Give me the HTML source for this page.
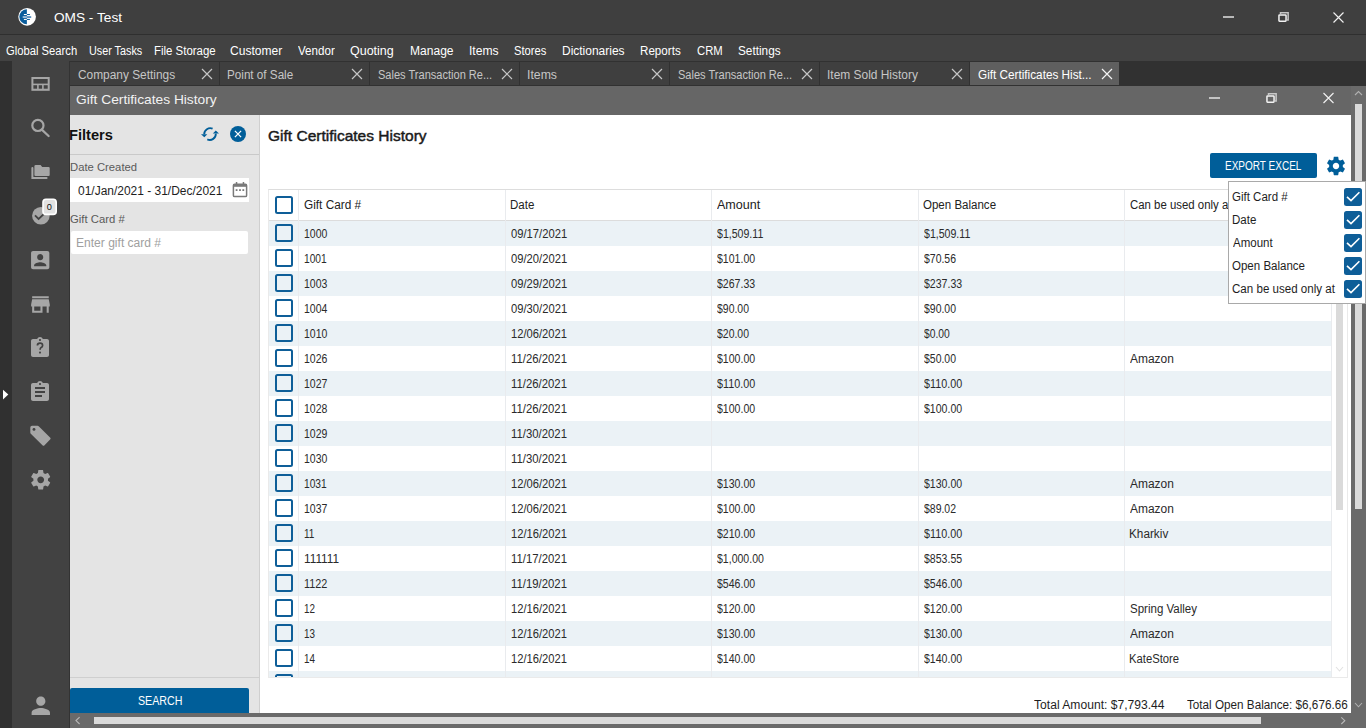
<!DOCTYPE html>
<html><head><meta charset="utf-8"><title>OMS - Test</title>
<style>
html,body{margin:0;padding:0;width:1366px;height:728px;overflow:hidden;background:#3c3c3c;font-family:"Liberation Sans", sans-serif;}
</style></head><body>
<div style="position:absolute;left:0px;top:0px;width:1366px;height:34px;background:#3f3f3f;"></div>
<div style="position:absolute;left:0px;top:34px;width:1366px;height:1px;background:#2f2f2f;"></div>
<svg style="position:absolute;left:17px;top:7px" width="20" height="20" viewBox="0 0 20 20">
<circle cx="10.1" cy="9.85" r="8.85" fill="#fff"/>
<path d="M9.9 2.15 A7.6 7.6 0 0 0 9.9 17.35 Z" fill="#0a5d9c"/>
<rect x="6.9" y="7" width="3" height="1.05" fill="#fff"/>
<rect x="9.9" y="7" width="3" height="1.05" fill="#0a5d9c"/>
<rect x="5.7" y="9.25" width="4.2" height="1.6" fill="#b9cde0"/>
<rect x="9.9" y="9.25" width="4.3" height="1.6" fill="#3f7fb5"/>
<rect x="6.9" y="11.9" width="3" height="1.05" fill="#fff"/>
<rect x="9.9" y="11.9" width="3" height="1.05" fill="#0a5d9c"/>
</svg>
<div style="position:absolute;left:53.65px;top:8.20px;font-size:13px;font-weight:400;line-height:20px;color:#ffffff;white-space:nowrap;transform:scaleX(1.0497);transform-origin:0 0;">OMS - Test</div>
<div style="position:absolute;left:1223px;top:16px;width:11px;height:2px;background:#b8b8b8;"></div>
<svg style="position:absolute;left:1277px;top:11px" width="14" height="13" viewBox="0 0 14 13">
<rect x="1.95" y="3.95" width="7.1" height="6.2" fill="none" stroke="#f2f2f2" stroke-width="1.5" rx="0.6"/>
<path d="M3.5 3.2 V1.75 H11.15 V8.9 H9.8" fill="none" stroke="#c4c4c4" stroke-width="1.5"/>
</svg>
<svg style="position:absolute;left:1333px;top:12px" width="11" height="11" viewBox="0 0 11 11">
<path d="M0.5 0.5 L10.5 10.5 M10.5 0.5 L0.5 10.5" stroke="#f0f0f0" stroke-width="1.15"/></svg>
<div style="position:absolute;left:0px;top:35px;width:1366px;height:26px;background:#424242;"></div>
<div style="position:absolute;left:6.03px;top:41.00px;font-size:12.3px;font-weight:400;line-height:20px;color:#ffffff;white-space:nowrap;transform:scaleX(0.9139);transform-origin:0 0;">Global Search</div>
<div style="position:absolute;left:89.37px;top:41.00px;font-size:12.3px;font-weight:400;line-height:20px;color:#ffffff;white-space:nowrap;transform:scaleX(0.8775);transform-origin:0 0;">User Tasks</div>
<div style="position:absolute;left:154.26px;top:41.00px;font-size:12.3px;font-weight:400;line-height:20px;color:#ffffff;white-space:nowrap;transform:scaleX(0.9305);transform-origin:0 0;">File Storage</div>
<div style="position:absolute;left:229.89px;top:41.00px;font-size:12.3px;font-weight:400;line-height:20px;color:#ffffff;white-space:nowrap;transform:scaleX(0.9794);transform-origin:0 0;">Customer</div>
<div style="position:absolute;left:298.05px;top:41.00px;font-size:12.3px;font-weight:400;line-height:20px;color:#ffffff;white-space:nowrap;transform:scaleX(0.9427);transform-origin:0 0;">Vendor</div>
<div style="position:absolute;left:350.21px;top:41.00px;font-size:12.3px;font-weight:400;line-height:20px;color:#ffffff;white-space:nowrap;transform:scaleX(1.0153);transform-origin:0 0;">Quoting</div>
<div style="position:absolute;left:410.11px;top:41.00px;font-size:12.3px;font-weight:400;line-height:20px;color:#ffffff;white-space:nowrap;transform:scaleX(0.9796);transform-origin:0 0;">Manage</div>
<div style="position:absolute;left:469.38px;top:41.00px;font-size:12.3px;font-weight:400;line-height:20px;color:#ffffff;white-space:nowrap;transform:scaleX(0.9868);transform-origin:0 0;">Items</div>
<div style="position:absolute;left:514.49px;top:41.00px;font-size:12.3px;font-weight:400;line-height:20px;color:#ffffff;white-space:nowrap;transform:scaleX(0.9101);transform-origin:0 0;">Stores</div>
<div style="position:absolute;left:562.42px;top:41.00px;font-size:12.3px;font-weight:400;line-height:20px;color:#ffffff;white-space:nowrap;transform:scaleX(0.9733);transform-origin:0 0;">Dictionaries</div>
<div style="position:absolute;left:640.25px;top:41.00px;font-size:12.3px;font-weight:400;line-height:20px;color:#ffffff;white-space:nowrap;transform:scaleX(0.9451);transform-origin:0 0;">Reports</div>
<div style="position:absolute;left:696.93px;top:41.00px;font-size:12.3px;font-weight:400;line-height:20px;color:#ffffff;white-space:nowrap;transform:scaleX(0.9176);transform-origin:0 0;">CRM</div>
<div style="position:absolute;left:738.46px;top:41.00px;font-size:12.3px;font-weight:400;line-height:20px;color:#ffffff;white-space:nowrap;transform:scaleX(0.9583);transform-origin:0 0;">Settings</div>
<div style="position:absolute;left:0px;top:61px;width:12px;height:667px;background:#303030;"></div>
<div style="position:absolute;left:12px;top:61px;width:57px;height:667px;background:#424242;"></div>
<div style="position:absolute;left:69px;top:61px;width:1px;height:667px;background:#333333;"></div>
<svg style="position:absolute;left:2px;top:388px" width="8" height="13" viewBox="0 0 8 13"><path d="M1 1.7 L6.3 6.55 L1 11.4 Z" fill="#fff"/></svg>
<svg style="position:absolute;left:31px;top:76px" width="20" height="16" viewBox="0 0 20 16">
<rect x="0.4" y="1" width="18.3" height="13.8" fill="#a6a6a6"/>
<rect x="2.4" y="3" width="14.3" height="4.6" fill="#424242"/>
<rect x="2.4" y="9.2" width="3.7" height="3.5" fill="#424242"/>
<rect x="7.7" y="9.2" width="3.4" height="3.5" fill="#424242"/>
<rect x="12.7" y="9.2" width="4" height="3.5" fill="#424242"/>
</svg>
<svg style="position:absolute;left:30px;top:118px" width="20" height="20" viewBox="0 0 20 20">
<circle cx="7.9" cy="7.4" r="5.6" fill="none" stroke="#a6a6a6" stroke-width="2.2"/>
<path d="M11.8 11.6 L18.6 18" stroke="#a6a6a6" stroke-width="2.2" stroke-linecap="round"/>
</svg>
<svg style="position:absolute;left:30px;top:163px" width="21" height="18" viewBox="0 0 21 18">
<path d="M2.4 5 V14.9 H16.6" fill="none" stroke="#a6a6a6" stroke-width="2" stroke-linecap="round"/>
<path d="M4.4 3.2 Q4.4 1.9 5.7 1.9 H10.6 L12.2 4 H18.6 Q19.7 4 19.7 5.1 V12 Q19.7 13.1 18.6 13.1 H5.5 Q4.4 13.1 4.4 12 Z" fill="#a6a6a6"/>
</svg>
<svg style="position:absolute;left:30px;top:196px" width="30" height="32" viewBox="0 0 30 32">
<circle cx="10.9" cy="19.8" r="8.8" fill="#a6a6a6"/>
<path d="M5 19.4 L8.6 23 L14 17.8" fill="none" stroke="#424242" stroke-width="1.8"/>
<rect x="13" y="3.2" width="13.2" height="15.2" rx="3" fill="#e2e2e2" stroke="#fff" stroke-width="1.6"/>
<text x="19.4" y="13.7" font-family="Liberation Sans" font-size="9.2" text-anchor="middle" fill="#111">0</text>
</svg>
<svg style="position:absolute;left:28.4px;top:247.8px" width="24.4" height="24.4" viewBox="0 0 24 24">
<path d="M3 5v14c0 1.1.89 2 2 2h14c1.1 0 2-.9 2-2V5c0-1.1-.9-2-2-2H5c-1.11 0-2 .9-2 2zm12 4c0 1.66-1.34 3-3 3s-3-1.34-3-3 1.34-3 3-3 3 1.34 3 3zm-9 8c0-2 4-3.1 6-3.1s6 1.1 6 3.1v1H6v-1z" fill="#a6a6a6"/>
</svg>
<svg style="position:absolute;left:28.1px;top:291.8px" width="24.9" height="24.1" viewBox="0 0 24 23.2">
<path d="M20 4H4v2h16V4zm1 10v-2l-1-5H4l-1 5v2h1v6h10v-6h4v6h2v-6h1zm-9 4H6v-4h6v4z" fill="#a6a6a6"/>
</svg>
<svg style="position:absolute;left:28.4px;top:335.9px" width="24" height="24" viewBox="0 0 24 24">
<path d="M19 3h-4.18C14.4 1.84 13.3 1 12 1c-1.3 0-2.4.84-2.82 2H5c-1.1 0-2 .9-2 2v14c0 1.1.9 2 2 2h14c1.1 0 2-.9 2-2V5c0-1.1-.9-2-2-2zm-7 0c.55 0 1 .45 1 1s-.45 1-1 1-1-.45-1-1 .45-1 1-1z" fill="#a6a6a6"/>
<path d="M9.4 9.6 Q9.4 7.2 12 7.2 Q14.6 7.2 14.6 9.4 Q14.6 10.8 13.1 11.6 Q12.1 12.2 12.1 13.8" fill="none" stroke="#424242" stroke-width="1.7"/>
<circle cx="12" cy="16.6" r="1.05" fill="#424242"/>
</svg>
<svg style="position:absolute;left:28.4px;top:379.9px" width="24" height="24" viewBox="0 0 24 24">
<path d="M19 3h-4.18C14.4 1.84 13.3 1 12 1c-1.3 0-2.4.84-2.82 2H5c-1.1 0-2 .9-2 2v14c0 1.1.9 2 2 2h14c1.1 0 2-.9 2-2V5c0-1.1-.9-2-2-2zm-7 0c.55 0 1 .45 1 1s-.45 1-1 1-1-.45-1-1 .45-1 1-1zm2 14H7v-2h7v2zm3-4H7v-2h10v2zm0-4H7V7h10v2z" fill="#a6a6a6"/>
</svg>
<svg style="position:absolute;left:26px;top:421px" width="30" height="30" viewBox="0 0 30 30">
<path d="M4.3 6.4 Q4.3 4.7 6 4.7 H11.6 Q12.2 4.7 12.7 5.2 L24.3 16.7 Q25 17.5 24.3 18.3 L18.3 24.4 Q17.5 25.2 16.7 24.4 L4.8 12.8 Q4.3 12.3 4.3 11.6 Z" fill="#a6a6a6"/>
<circle cx="8" cy="8.4" r="1.45" fill="#424242"/>
</svg>
<svg style="position:absolute;left:28.7px;top:467.7px" width="23.4" height="23.6" viewBox="0 0 24 24">
<path d="M19.43 12.98c.04-.32.07-.64.07-.98s-.03-.66-.07-.98l2.11-1.65c.19-.15.24-.42.12-.64l-2-3.46c-.12-.22-.39-.3-.61-.22l-2.49 1c-.52-.4-1.08-.73-1.69-.98l-.38-2.65C14.46 2.18 14.25 2 14 2h-4c-.25 0-.46.18-.49.42l-.38 2.650c-.61.25-1.17.59-1.69.98l-2.49-1c-.23-.09-.49 0-.61.22l-2 3.46c-.13.22-.07.49.12.64l2.11 1.65c-.04.32-.07.65-.07.98s.03.66.07.98l-2.11 1.65c-.19.15-.24.42-.12.64l2 3.46c.12.22.39.3.61.22l2.49-1c.52.4 1.08.73 1.69.98l.38 2.65c.03.24.24.42.49.42h4c.25 0 .46-.18.49-.42l.38-2.65c.61-.25 1.17-.59 1.69-.98l2.49 1c.23.09.49 0 .61-.22l2-3.46c.12-.22.07-.49-.12-.64l-2.11-1.65zM12 15.5c-1.93 0-3.5-1.57-3.5-3.5s1.57-3.5 3.5-3.5 3.5 1.57 3.5 3.5-1.57 3.5-3.5 3.5z" fill="#a6a6a6"/>
</svg>
<svg style="position:absolute;left:26.8px;top:692.4px" width="27.6" height="27" viewBox="0 0 24 23.5">
<path d="M12 12c2.21 0 4-1.79 4-4s-1.790-4-4-4-4 1.79-4 4 1.79 4 4 4zm0 2c-2.67 0-8 1.34-8 4v2h16v-2c0-2.66-5.33-4-8-4z" fill="#a6a6a6"/>
</svg>
<div style="position:absolute;left:70px;top:61px;width:1296px;height:25px;background:#313131;"></div>
<div style="position:absolute;left:70px;top:62px;width:149px;height:23px;background:#3f3f3f;"></div>
<div style="position:absolute;left:77.80px;top:65.00px;font-size:12.3px;font-weight:400;line-height:20px;color:#c6c6c6;white-space:nowrap;transform:scaleX(0.9669);transform-origin:0 0;">Company Settings</div>
<svg style="position:absolute;left:201px;top:68px" width="12" height="12" viewBox="0 0 12 12"><path d="M1 1 L11 11 M11 1 L1 11" stroke="#c6c6c6" stroke-width="1.2"/></svg>
<div style="position:absolute;left:220px;top:62px;width:149px;height:23px;background:#3f3f3f;"></div>
<div style="position:absolute;left:227.44px;top:65.00px;font-size:12.3px;font-weight:400;line-height:20px;color:#c6c6c6;white-space:nowrap;transform:scaleX(0.9495);transform-origin:0 0;">Point of Sale</div>
<svg style="position:absolute;left:351px;top:68px" width="12" height="12" viewBox="0 0 12 12"><path d="M1 1 L11 11 M11 1 L1 11" stroke="#c6c6c6" stroke-width="1.2"/></svg>
<div style="position:absolute;left:370px;top:62px;width:149px;height:23px;background:#3f3f3f;"></div>
<div style="position:absolute;left:377.90px;top:65.00px;font-size:12.3px;font-weight:400;line-height:20px;color:#c6c6c6;white-space:nowrap;transform:scaleX(0.8981);transform-origin:0 0;">Sales Transaction Re...</div>
<svg style="position:absolute;left:501px;top:68px" width="12" height="12" viewBox="0 0 12 12"><path d="M1 1 L11 11 M11 1 L1 11" stroke="#c6c6c6" stroke-width="1.2"/></svg>
<div style="position:absolute;left:520px;top:62px;width:149px;height:23px;background:#3f3f3f;"></div>
<div style="position:absolute;left:527.27px;top:65.00px;font-size:12.3px;font-weight:400;line-height:20px;color:#c6c6c6;white-space:nowrap;transform:scaleX(0.9972);transform-origin:0 0;">Items</div>
<svg style="position:absolute;left:651px;top:68px" width="12" height="12" viewBox="0 0 12 12"><path d="M1 1 L11 11 M11 1 L1 11" stroke="#c6c6c6" stroke-width="1.2"/></svg>
<div style="position:absolute;left:670px;top:62px;width:149px;height:23px;background:#3f3f3f;"></div>
<div style="position:absolute;left:677.90px;top:65.00px;font-size:12.3px;font-weight:400;line-height:20px;color:#c6c6c6;white-space:nowrap;transform:scaleX(0.8981);transform-origin:0 0;">Sales Transaction Re...</div>
<svg style="position:absolute;left:801px;top:68px" width="12" height="12" viewBox="0 0 12 12"><path d="M1 1 L11 11 M11 1 L1 11" stroke="#c6c6c6" stroke-width="1.2"/></svg>
<div style="position:absolute;left:820px;top:62px;width:149px;height:23px;background:#3f3f3f;"></div>
<div style="position:absolute;left:827.30px;top:65.00px;font-size:12.3px;font-weight:400;line-height:20px;color:#c6c6c6;white-space:nowrap;transform:scaleX(0.9707);transform-origin:0 0;">Item Sold History</div>
<svg style="position:absolute;left:951px;top:68px" width="12" height="12" viewBox="0 0 12 12"><path d="M1 1 L11 11 M11 1 L1 11" stroke="#c6c6c6" stroke-width="1.2"/></svg>
<div style="position:absolute;left:970px;top:62px;width:149px;height:23px;background:#5f5f5f;"></div>
<div style="position:absolute;left:977.81px;top:65.00px;font-size:12.3px;font-weight:400;line-height:20px;color:#ffffff;white-space:nowrap;transform:scaleX(0.9554);transform-origin:0 0;">Gift Certificates Hist...</div>
<svg style="position:absolute;left:1101px;top:68px" width="12" height="12" viewBox="0 0 12 12"><path d="M1 1 L11 11 M11 1 L1 11" stroke="#f4f4f4" stroke-width="1.2"/></svg>
<div style="position:absolute;left:70px;top:86px;width:1281px;height:29px;background:#666666;"></div>
<div style="position:absolute;left:75.71px;top:90.00px;font-size:13.6px;font-weight:400;line-height:20px;color:#f2f2f2;white-space:nowrap;transform:scaleX(1.0123);transform-origin:0 0;">Gift Certificates History</div>
<div style="position:absolute;left:1209px;top:97px;width:11px;height:2px;background:#c4c4c4;"></div>
<svg style="position:absolute;left:1265px;top:92px" width="14" height="13" viewBox="0 0 14 13">
<rect x="1.95" y="3.95" width="7.1" height="6.2" fill="none" stroke="#f2f2f2" stroke-width="1.5" rx="0.6"/>
<path d="M3.5 3.2 V1.75 H11.15 V8.9 H9.8" fill="none" stroke="#c8c8c8" stroke-width="1.5"/>
</svg>
<svg style="position:absolute;left:1323px;top:92px" width="11" height="12" viewBox="0 0 11 12">
<path d="M0.5 1 L10.5 11 M10.5 1 L0.5 11" stroke="#f0f0f0" stroke-width="1.15"/></svg>
<div style="position:absolute;left:1351px;top:86px;width:15px;height:627px;background:#6a6a6a;"></div>
<div style="position:absolute;left:1355px;top:104px;width:7px;height:405px;background:#dadada;"></div>
<svg style="position:absolute;left:1353px;top:89px" width="11" height="8" viewBox="0 0 11 8"><path d="M2 6 L5.5 2.5 L9 6" fill="none" stroke="#b0b0b0" stroke-width="1.1"/></svg>
<svg style="position:absolute;left:1353px;top:701px" width="11" height="8" viewBox="0 0 11 8"><path d="M2 2 L5.5 5.8 L9 2" fill="none" stroke="#b0b0b0" stroke-width="1.1"/></svg>
<div style="position:absolute;left:70px;top:713px;width:1296px;height:15px;background:#6a6a6a;"></div>
<div style="position:absolute;left:94px;top:717px;width:1167px;height:7px;background:#dadada;"></div>
<svg style="position:absolute;left:74px;top:716px" width="8" height="10" viewBox="0 0 8 10"><path d="M5.6 1.2 L2 4.6 L5.6 8" fill="none" stroke="#b8b8b8" stroke-width="1.1"/></svg>
<svg style="position:absolute;left:1339px;top:716px" width="8" height="10" viewBox="0 0 8 10"><path d="M2.3 1.4 L5.8 4.7 L2.3 8" fill="none" stroke="#b8b8b8" stroke-width="1.1"/></svg>
<div style="position:absolute;left:70px;top:115px;width:189px;height:598px;background:#e4e4e4;"></div>
<div style="position:absolute;left:259px;top:115px;width:1px;height:598px;background:#cfcfcf;"></div>
<div style="position:absolute;left:69.02px;top:125.00px;font-size:14.8px;font-weight:700;line-height:20px;color:#111111;white-space:nowrap;transform:scaleX(0.9888);transform-origin:0 0;">Filters</div>
<svg style="position:absolute;left:196px;top:120px" width="28" height="28" viewBox="0 0 28 28">
<path d="M16.6 8.7 A6 6 0 0 0 8.2 14.2" fill="none" stroke="#005e99" stroke-width="1.9"/>
<path d="M11.3 19.4 A6 6 0 0 0 19.8 13.6" fill="none" stroke="#005e99" stroke-width="1.9"/>
<path d="M5 14.2 H11.3 L8.3 17.3 Z" fill="#005e99"/>
<path d="M16.8 13.6 H23 L19.8 10.5 Z" fill="#005e99"/>
</svg>
<svg style="position:absolute;left:229px;top:125px" width="18" height="18" viewBox="0 0 18 18">
<circle cx="9" cy="9" r="8" fill="#005e99"/>
<path d="M5.9 5.9 L12.1 12.1 M12.1 5.9 L5.9 12.1" stroke="#fff" stroke-width="1.25"/>
</svg>
<div style="position:absolute;left:70px;top:154px;width:189px;height:1px;background:#c9c9c9;"></div>
<div style="position:absolute;left:69.68px;top:157.00px;font-size:11px;font-weight:400;line-height:20px;color:#5a5a5a;white-space:nowrap;transform:scaleX(1.0248);transform-origin:0 0;">Date Created</div>
<div style="position:absolute;left:70px;top:178px;width:179px;height:24px;background:#ffffff;"></div>
<div style="position:absolute;left:77.53px;top:181.20px;font-size:12px;font-weight:400;line-height:20px;color:#1e1e1e;white-space:nowrap;transform:scaleX(0.9977);transform-origin:0 0;">01/Jan/2021 - 31/Dec/2021</div>
<svg style="position:absolute;left:232px;top:181px" width="16" height="17" viewBox="0 0 16 17">
<rect x="1.4" y="3.2" width="13.2" height="12.4" rx="1.2" fill="none" stroke="#7a7a7a" stroke-width="1.5"/>
<rect x="1.4" y="3.2" width="13.2" height="2.6" fill="#7a7a7a"/>
<rect x="3.8" y="1" width="1.5" height="3" fill="#7a7a7a"/>
<rect x="10.7" y="1" width="1.5" height="3" fill="#7a7a7a"/>
<rect x="3.7" y="8.2" width="1.8" height="1.8" fill="#7a7a7a"/>
<rect x="7.1" y="8.2" width="1.8" height="1.8" fill="#7a7a7a"/>
<rect x="10.4" y="8.2" width="1.8" height="1.8" fill="#7a7a7a"/>
</svg>
<div style="position:absolute;left:70.03px;top:209.00px;font-size:11px;font-weight:400;line-height:20px;color:#5a5a5a;white-space:nowrap;transform:scaleX(1.0278);transform-origin:0 0;">Gift Card #</div>
<div style="position:absolute;left:71px;top:231px;width:177px;height:23px;background:#ffffff;border-radius:2px"></div>
<div style="position:absolute;left:75.71px;top:233.00px;font-size:12px;font-weight:400;line-height:20px;color:#a0a0a0;white-space:nowrap;transform:scaleX(1.0042);transform-origin:0 0;">Enter gift card #</div>
<div style="position:absolute;left:70px;top:677px;width:189px;height:1px;background:#cfcfcf;"></div>
<div style="position:absolute;left:70px;top:688px;width:179px;height:25px;background:#005e99;border-radius:2px 2px 0 0"></div>
<div style="position:absolute;left:137.82px;top:691.40px;font-size:12px;font-weight:400;line-height:20px;color:#ffffff;white-space:nowrap;transform:scaleX(0.8894);transform-origin:0 0;">SEARCH</div>
<div style="position:absolute;left:260px;top:115px;width:1091px;height:598px;background:#ffffff;"></div>
<div style="position:absolute;left:267.92px;top:126.00px;font-size:15px;font-weight:400;line-height:20px;color:#1a1a1a;white-space:nowrap;transform:scaleX(1.0339);transform-origin:0 0;-webkit-text-stroke:0.45px #1a1a1a;">Gift Certificates History</div>
<div style="position:absolute;left:1210px;top:153px;width:107px;height:25px;background:#005e99;border-radius:2px"></div>
<div style="position:absolute;left:1224.78px;top:156.40px;font-size:12px;font-weight:400;line-height:20px;color:#ffffff;white-space:nowrap;transform:scaleX(0.8338);transform-origin:0 0;">EXPORT EXCEL</div>
<svg style="position:absolute;left:1325px;top:155px" width="22" height="22" viewBox="0 0 24 24">
<path d="M19.43 12.98c.04-.32.07-.64.07-.98s-.03-.66-.07-.98l2.11-1.65c.19-.15.24-.42.12-.64l-2-3.46c-.12-.22-.39-.3-.61-.22l-2.49 1c-.52-.4-1.080-.73-1.69-.98l-.38-2.65C14.46 2.18 14.25 2 14 2h-4c-.25 0-.46.18-.49.42l-.38 2.65c-.61.25-1.17.59-1.69.98l-2.49-1c-.23-.09-.49 0-.61.22l-2 3.46c-.13.22-.07.49.12.64l2.11 1.65c-.04.32-.07.65-.07.98s.03.66.07.98l-2.11 1.65c-.19.15-.24.42-.12.64l2 3.46c.12.22.39.3.61.22l2.49-1c.52.4 1.08.73 1.69.98l.38 2.65c.03.24.24.42.49.42h4c.25 0 .46-.18.49-.42l.38-2.65c.61-.25 1.17-.59 1.69-.98l2.49 1c.23.09.49 0 .61-.22l2-3.46c.12-.22.07-.49-.12-.64l-2.11-1.65zM12 15.5c-1.93 0-3.5-1.57-3.5-3.5s1.57-3.5 3.5-3.5 3.5 1.57 3.5 3.5-1.57 3.5-3.5 3.5z" fill="#005e99"/>
</svg>
<div style="position:absolute;left:268px;top:189px;width:1080px;height:489px;background:#ffffff;box-sizing:border-box;border:1px solid #eaeaea;border-top-color:#dddddd"></div>
<div style="position:absolute;left:269px;top:220px;width:1063px;height:1px;background:#dcdcdc;"></div>
<div style="position:absolute;left:269px;top:221px;width:1063px;height:25px;background:#ebf2f6;"></div>
<div style="position:absolute;left:269px;top:271px;width:1063px;height:25px;background:#ebf2f6;"></div>
<div style="position:absolute;left:269px;top:321px;width:1063px;height:25px;background:#ebf2f6;"></div>
<div style="position:absolute;left:269px;top:371px;width:1063px;height:25px;background:#ebf2f6;"></div>
<div style="position:absolute;left:269px;top:421px;width:1063px;height:25px;background:#ebf2f6;"></div>
<div style="position:absolute;left:269px;top:471px;width:1063px;height:25px;background:#ebf2f6;"></div>
<div style="position:absolute;left:269px;top:521px;width:1063px;height:25px;background:#ebf2f6;"></div>
<div style="position:absolute;left:269px;top:571px;width:1063px;height:25px;background:#ebf2f6;"></div>
<div style="position:absolute;left:269px;top:621px;width:1063px;height:25px;background:#ebf2f6;"></div>
<div style="position:absolute;left:269px;top:671px;width:1063px;height:6px;background:#ebf2f6;"></div>
<div style="position:absolute;left:298px;top:190px;width:1px;height:487px;background:#e9ebee;"></div>
<div style="position:absolute;left:505px;top:190px;width:1px;height:487px;background:#e9ebee;"></div>
<div style="position:absolute;left:711px;top:190px;width:1px;height:487px;background:#e9ebee;"></div>
<div style="position:absolute;left:918px;top:190px;width:1px;height:487px;background:#e9ebee;"></div>
<div style="position:absolute;left:1124px;top:190px;width:1px;height:487px;background:#e9ebee;"></div>
<div style="position:absolute;left:1331px;top:190px;width:1px;height:487px;background:#e9ebee;"></div>
<div style="position:absolute;left:275px;top:196px;width:18px;height:18px;background:transparent;box-sizing:border-box;border:2px solid #0e5e98;border-radius:2.5px"></div>
<div style="position:absolute;left:303.81px;top:195.40px;font-size:12px;font-weight:400;line-height:20px;color:#222222;white-space:nowrap;transform:scaleX(0.9837);transform-origin:0 0;">Gift Card #</div>
<div style="position:absolute;left:510.06px;top:195.40px;font-size:12px;font-weight:400;line-height:20px;color:#222222;white-space:nowrap;transform:scaleX(0.9599);transform-origin:0 0;">Date</div>
<div style="position:absolute;left:716.98px;top:195.40px;font-size:12px;font-weight:400;line-height:20px;color:#222222;white-space:nowrap;transform:scaleX(1.0453);transform-origin:0 0;">Amount</div>
<div style="position:absolute;left:923.45px;top:195.40px;font-size:12px;font-weight:400;line-height:20px;color:#222222;white-space:nowrap;transform:scaleX(0.9603);transform-origin:0 0;">Open Balance</div>
<div style="position:absolute;left:1129.72px;top:195.40px;font-size:12px;font-weight:400;line-height:20px;color:#222222;white-space:nowrap;transform:scaleX(0.9500);transform-origin:0 0;">Can be used only at</div>
<div style="position:absolute;left:275px;top:224px;width:18px;height:18px;background:transparent;box-sizing:border-box;border:2px solid #0e5e98;border-radius:2.5px"></div>
<div style="position:absolute;left:303.60px;top:224.40px;font-size:12px;font-weight:400;line-height:20px;color:#2a2a2a;white-space:nowrap;transform:scaleX(0.8733);transform-origin:0 0;">1000</div>
<div style="position:absolute;left:510.56px;top:224.40px;font-size:12px;font-weight:400;line-height:20px;color:#2a2a2a;white-space:nowrap;transform:scaleX(0.9346);transform-origin:0 0;">09/17/2021</div>
<div style="position:absolute;left:716.89px;top:224.40px;font-size:12px;font-weight:400;line-height:20px;color:#2a2a2a;white-space:nowrap;transform:scaleX(0.8815);transform-origin:0 0;">$1,509.11</div>
<div style="position:absolute;left:923.89px;top:224.40px;font-size:12px;font-weight:400;line-height:20px;color:#2a2a2a;white-space:nowrap;transform:scaleX(0.8815);transform-origin:0 0;">$1,509.11</div>
<div style="position:absolute;left:275px;top:249px;width:18px;height:18px;background:transparent;box-sizing:border-box;border:2px solid #0e5e98;border-radius:2.5px"></div>
<div style="position:absolute;left:303.62px;top:249.40px;font-size:12px;font-weight:400;line-height:20px;color:#2a2a2a;white-space:nowrap;transform:scaleX(0.8503);transform-origin:0 0;">1001</div>
<div style="position:absolute;left:510.56px;top:249.40px;font-size:12px;font-weight:400;line-height:20px;color:#2a2a2a;white-space:nowrap;transform:scaleX(0.9346);transform-origin:0 0;">09/20/2021</div>
<div style="position:absolute;left:716.89px;top:249.40px;font-size:12px;font-weight:400;line-height:20px;color:#2a2a2a;white-space:nowrap;transform:scaleX(0.8790);transform-origin:0 0;">$101.00</div>
<div style="position:absolute;left:923.89px;top:249.40px;font-size:12px;font-weight:400;line-height:20px;color:#2a2a2a;white-space:nowrap;transform:scaleX(0.8713);transform-origin:0 0;">$70.56</div>
<div style="position:absolute;left:275px;top:274px;width:18px;height:18px;background:transparent;box-sizing:border-box;border:2px solid #0e5e98;border-radius:2.5px"></div>
<div style="position:absolute;left:303.60px;top:274.40px;font-size:12px;font-weight:400;line-height:20px;color:#2a2a2a;white-space:nowrap;transform:scaleX(0.8733);transform-origin:0 0;">1003</div>
<div style="position:absolute;left:510.56px;top:274.40px;font-size:12px;font-weight:400;line-height:20px;color:#2a2a2a;white-space:nowrap;transform:scaleX(0.9346);transform-origin:0 0;">09/29/2021</div>
<div style="position:absolute;left:716.89px;top:274.40px;font-size:12px;font-weight:400;line-height:20px;color:#2a2a2a;white-space:nowrap;transform:scaleX(0.8790);transform-origin:0 0;">$267.33</div>
<div style="position:absolute;left:923.89px;top:274.40px;font-size:12px;font-weight:400;line-height:20px;color:#2a2a2a;white-space:nowrap;transform:scaleX(0.8790);transform-origin:0 0;">$237.33</div>
<div style="position:absolute;left:275px;top:299px;width:18px;height:18px;background:transparent;box-sizing:border-box;border:2px solid #0e5e98;border-radius:2.5px"></div>
<div style="position:absolute;left:303.60px;top:299.40px;font-size:12px;font-weight:400;line-height:20px;color:#2a2a2a;white-space:nowrap;transform:scaleX(0.8733);transform-origin:0 0;">1004</div>
<div style="position:absolute;left:510.56px;top:299.40px;font-size:12px;font-weight:400;line-height:20px;color:#2a2a2a;white-space:nowrap;transform:scaleX(0.9346);transform-origin:0 0;">09/30/2021</div>
<div style="position:absolute;left:716.89px;top:299.40px;font-size:12px;font-weight:400;line-height:20px;color:#2a2a2a;white-space:nowrap;transform:scaleX(0.8713);transform-origin:0 0;">$90.00</div>
<div style="position:absolute;left:923.89px;top:299.40px;font-size:12px;font-weight:400;line-height:20px;color:#2a2a2a;white-space:nowrap;transform:scaleX(0.8713);transform-origin:0 0;">$90.00</div>
<div style="position:absolute;left:275px;top:324px;width:18px;height:18px;background:transparent;box-sizing:border-box;border:2px solid #0e5e98;border-radius:2.5px"></div>
<div style="position:absolute;left:303.60px;top:324.40px;font-size:12px;font-weight:400;line-height:20px;color:#2a2a2a;white-space:nowrap;transform:scaleX(0.8733);transform-origin:0 0;">1010</div>
<div style="position:absolute;left:511.05px;top:324.40px;font-size:12px;font-weight:400;line-height:20px;color:#2a2a2a;white-space:nowrap;transform:scaleX(0.9316);transform-origin:0 0;">12/06/2021</div>
<div style="position:absolute;left:716.89px;top:324.40px;font-size:12px;font-weight:400;line-height:20px;color:#2a2a2a;white-space:nowrap;transform:scaleX(0.8713);transform-origin:0 0;">$20.00</div>
<div style="position:absolute;left:923.89px;top:324.40px;font-size:12px;font-weight:400;line-height:20px;color:#2a2a2a;white-space:nowrap;transform:scaleX(0.8602);transform-origin:0 0;">$0.00</div>
<div style="position:absolute;left:275px;top:349px;width:18px;height:18px;background:transparent;box-sizing:border-box;border:2px solid #0e5e98;border-radius:2.5px"></div>
<div style="position:absolute;left:303.60px;top:349.40px;font-size:12px;font-weight:400;line-height:20px;color:#2a2a2a;white-space:nowrap;transform:scaleX(0.8733);transform-origin:0 0;">1026</div>
<div style="position:absolute;left:511.04px;top:349.40px;font-size:12px;font-weight:400;line-height:20px;color:#2a2a2a;white-space:nowrap;transform:scaleX(0.9457);transform-origin:0 0;">11/26/2021</div>
<div style="position:absolute;left:716.89px;top:349.40px;font-size:12px;font-weight:400;line-height:20px;color:#2a2a2a;white-space:nowrap;transform:scaleX(0.8790);transform-origin:0 0;">$100.00</div>
<div style="position:absolute;left:923.89px;top:349.40px;font-size:12px;font-weight:400;line-height:20px;color:#2a2a2a;white-space:nowrap;transform:scaleX(0.8713);transform-origin:0 0;">$50.00</div>
<div style="position:absolute;left:1130.28px;top:349.40px;font-size:12px;font-weight:400;line-height:20px;color:#2a2a2a;white-space:nowrap;transform:scaleX(0.9971);transform-origin:0 0;">Amazon</div>
<div style="position:absolute;left:275px;top:374px;width:18px;height:18px;background:transparent;box-sizing:border-box;border:2px solid #0e5e98;border-radius:2.5px"></div>
<div style="position:absolute;left:303.60px;top:374.40px;font-size:12px;font-weight:400;line-height:20px;color:#2a2a2a;white-space:nowrap;transform:scaleX(0.8733);transform-origin:0 0;">1027</div>
<div style="position:absolute;left:511.04px;top:374.40px;font-size:12px;font-weight:400;line-height:20px;color:#2a2a2a;white-space:nowrap;transform:scaleX(0.9457);transform-origin:0 0;">11/26/2021</div>
<div style="position:absolute;left:716.88px;top:374.40px;font-size:12px;font-weight:400;line-height:20px;color:#2a2a2a;white-space:nowrap;transform:scaleX(0.8973);transform-origin:0 0;">$110.00</div>
<div style="position:absolute;left:923.88px;top:374.40px;font-size:12px;font-weight:400;line-height:20px;color:#2a2a2a;white-space:nowrap;transform:scaleX(0.8973);transform-origin:0 0;">$110.00</div>
<div style="position:absolute;left:275px;top:399px;width:18px;height:18px;background:transparent;box-sizing:border-box;border:2px solid #0e5e98;border-radius:2.5px"></div>
<div style="position:absolute;left:303.60px;top:399.40px;font-size:12px;font-weight:400;line-height:20px;color:#2a2a2a;white-space:nowrap;transform:scaleX(0.8733);transform-origin:0 0;">1028</div>
<div style="position:absolute;left:511.04px;top:399.40px;font-size:12px;font-weight:400;line-height:20px;color:#2a2a2a;white-space:nowrap;transform:scaleX(0.9457);transform-origin:0 0;">11/26/2021</div>
<div style="position:absolute;left:716.89px;top:399.40px;font-size:12px;font-weight:400;line-height:20px;color:#2a2a2a;white-space:nowrap;transform:scaleX(0.8790);transform-origin:0 0;">$100.00</div>
<div style="position:absolute;left:923.89px;top:399.40px;font-size:12px;font-weight:400;line-height:20px;color:#2a2a2a;white-space:nowrap;transform:scaleX(0.8790);transform-origin:0 0;">$100.00</div>
<div style="position:absolute;left:275px;top:424px;width:18px;height:18px;background:transparent;box-sizing:border-box;border:2px solid #0e5e98;border-radius:2.5px"></div>
<div style="position:absolute;left:303.60px;top:424.40px;font-size:12px;font-weight:400;line-height:20px;color:#2a2a2a;white-space:nowrap;transform:scaleX(0.8733);transform-origin:0 0;">1029</div>
<div style="position:absolute;left:511.04px;top:424.40px;font-size:12px;font-weight:400;line-height:20px;color:#2a2a2a;white-space:nowrap;transform:scaleX(0.9457);transform-origin:0 0;">11/30/2021</div>
<div style="position:absolute;left:275px;top:449px;width:18px;height:18px;background:transparent;box-sizing:border-box;border:2px solid #0e5e98;border-radius:2.5px"></div>
<div style="position:absolute;left:303.60px;top:449.40px;font-size:12px;font-weight:400;line-height:20px;color:#2a2a2a;white-space:nowrap;transform:scaleX(0.8733);transform-origin:0 0;">1030</div>
<div style="position:absolute;left:511.04px;top:449.40px;font-size:12px;font-weight:400;line-height:20px;color:#2a2a2a;white-space:nowrap;transform:scaleX(0.9457);transform-origin:0 0;">11/30/2021</div>
<div style="position:absolute;left:275px;top:474px;width:18px;height:18px;background:transparent;box-sizing:border-box;border:2px solid #0e5e98;border-radius:2.5px"></div>
<div style="position:absolute;left:303.62px;top:474.40px;font-size:12px;font-weight:400;line-height:20px;color:#2a2a2a;white-space:nowrap;transform:scaleX(0.8503);transform-origin:0 0;">1031</div>
<div style="position:absolute;left:511.05px;top:474.40px;font-size:12px;font-weight:400;line-height:20px;color:#2a2a2a;white-space:nowrap;transform:scaleX(0.9316);transform-origin:0 0;">12/06/2021</div>
<div style="position:absolute;left:716.89px;top:474.40px;font-size:12px;font-weight:400;line-height:20px;color:#2a2a2a;white-space:nowrap;transform:scaleX(0.8790);transform-origin:0 0;">$130.00</div>
<div style="position:absolute;left:923.89px;top:474.40px;font-size:12px;font-weight:400;line-height:20px;color:#2a2a2a;white-space:nowrap;transform:scaleX(0.8790);transform-origin:0 0;">$130.00</div>
<div style="position:absolute;left:1130.28px;top:474.40px;font-size:12px;font-weight:400;line-height:20px;color:#2a2a2a;white-space:nowrap;transform:scaleX(0.9971);transform-origin:0 0;">Amazon</div>
<div style="position:absolute;left:275px;top:499px;width:18px;height:18px;background:transparent;box-sizing:border-box;border:2px solid #0e5e98;border-radius:2.5px"></div>
<div style="position:absolute;left:303.60px;top:499.40px;font-size:12px;font-weight:400;line-height:20px;color:#2a2a2a;white-space:nowrap;transform:scaleX(0.8733);transform-origin:0 0;">1037</div>
<div style="position:absolute;left:511.05px;top:499.40px;font-size:12px;font-weight:400;line-height:20px;color:#2a2a2a;white-space:nowrap;transform:scaleX(0.9316);transform-origin:0 0;">12/06/2021</div>
<div style="position:absolute;left:716.89px;top:499.40px;font-size:12px;font-weight:400;line-height:20px;color:#2a2a2a;white-space:nowrap;transform:scaleX(0.8790);transform-origin:0 0;">$100.00</div>
<div style="position:absolute;left:923.89px;top:499.40px;font-size:12px;font-weight:400;line-height:20px;color:#2a2a2a;white-space:nowrap;transform:scaleX(0.8713);transform-origin:0 0;">$89.02</div>
<div style="position:absolute;left:1130.28px;top:499.40px;font-size:12px;font-weight:400;line-height:20px;color:#2a2a2a;white-space:nowrap;transform:scaleX(0.9971);transform-origin:0 0;">Amazon</div>
<div style="position:absolute;left:275px;top:524px;width:18px;height:18px;background:transparent;box-sizing:border-box;border:2px solid #0e5e98;border-radius:2.5px"></div>
<div style="position:absolute;left:303.64px;top:524.40px;font-size:12px;font-weight:400;line-height:20px;color:#2a2a2a;white-space:nowrap;transform:scaleX(0.8341);transform-origin:0 0;">11</div>
<div style="position:absolute;left:511.05px;top:524.40px;font-size:12px;font-weight:400;line-height:20px;color:#2a2a2a;white-space:nowrap;transform:scaleX(0.9316);transform-origin:0 0;">12/16/2021</div>
<div style="position:absolute;left:716.89px;top:524.40px;font-size:12px;font-weight:400;line-height:20px;color:#2a2a2a;white-space:nowrap;transform:scaleX(0.8790);transform-origin:0 0;">$210.00</div>
<div style="position:absolute;left:923.88px;top:524.40px;font-size:12px;font-weight:400;line-height:20px;color:#2a2a2a;white-space:nowrap;transform:scaleX(0.8973);transform-origin:0 0;">$110.00</div>
<div style="position:absolute;left:1129.33px;top:524.40px;font-size:12px;font-weight:400;line-height:20px;color:#2a2a2a;white-space:nowrap;transform:scaleX(0.9813);transform-origin:0 0;">Kharkiv</div>
<div style="position:absolute;left:275px;top:549px;width:18px;height:18px;background:transparent;box-sizing:border-box;border:2px solid #0e5e98;border-radius:2.5px"></div>
<div style="position:absolute;left:303.50px;top:549.40px;font-size:12px;font-weight:400;line-height:20px;color:#2a2a2a;white-space:nowrap;transform:scaleX(0.9857);transform-origin:0 0;">111111</div>
<div style="position:absolute;left:511.04px;top:549.40px;font-size:12px;font-weight:400;line-height:20px;color:#2a2a2a;white-space:nowrap;transform:scaleX(0.9457);transform-origin:0 0;">11/17/2021</div>
<div style="position:absolute;left:716.89px;top:549.40px;font-size:12px;font-weight:400;line-height:20px;color:#2a2a2a;white-space:nowrap;transform:scaleX(0.8781);transform-origin:0 0;">$1,000.00</div>
<div style="position:absolute;left:923.89px;top:549.40px;font-size:12px;font-weight:400;line-height:20px;color:#2a2a2a;white-space:nowrap;transform:scaleX(0.8790);transform-origin:0 0;">$853.55</div>
<div style="position:absolute;left:275px;top:574px;width:18px;height:18px;background:transparent;box-sizing:border-box;border:2px solid #0e5e98;border-radius:2.5px"></div>
<div style="position:absolute;left:303.57px;top:574.40px;font-size:12px;font-weight:400;line-height:20px;color:#2a2a2a;white-space:nowrap;transform:scaleX(0.9042);transform-origin:0 0;">1122</div>
<div style="position:absolute;left:511.04px;top:574.40px;font-size:12px;font-weight:400;line-height:20px;color:#2a2a2a;white-space:nowrap;transform:scaleX(0.9457);transform-origin:0 0;">11/19/2021</div>
<div style="position:absolute;left:716.89px;top:574.40px;font-size:12px;font-weight:400;line-height:20px;color:#2a2a2a;white-space:nowrap;transform:scaleX(0.8790);transform-origin:0 0;">$546.00</div>
<div style="position:absolute;left:923.89px;top:574.40px;font-size:12px;font-weight:400;line-height:20px;color:#2a2a2a;white-space:nowrap;transform:scaleX(0.8790);transform-origin:0 0;">$546.00</div>
<div style="position:absolute;left:275px;top:599px;width:18px;height:18px;background:transparent;box-sizing:border-box;border:2px solid #0e5e98;border-radius:2.5px"></div>
<div style="position:absolute;left:303.65px;top:599.40px;font-size:12px;font-weight:400;line-height:20px;color:#2a2a2a;white-space:nowrap;transform:scaleX(0.8229);transform-origin:0 0;">12</div>
<div style="position:absolute;left:511.05px;top:599.40px;font-size:12px;font-weight:400;line-height:20px;color:#2a2a2a;white-space:nowrap;transform:scaleX(0.9316);transform-origin:0 0;">12/16/2021</div>
<div style="position:absolute;left:716.89px;top:599.40px;font-size:12px;font-weight:400;line-height:20px;color:#2a2a2a;white-space:nowrap;transform:scaleX(0.8790);transform-origin:0 0;">$120.00</div>
<div style="position:absolute;left:923.89px;top:599.40px;font-size:12px;font-weight:400;line-height:20px;color:#2a2a2a;white-space:nowrap;transform:scaleX(0.8790);transform-origin:0 0;">$120.00</div>
<div style="position:absolute;left:1129.78px;top:599.40px;font-size:12px;font-weight:400;line-height:20px;color:#2a2a2a;white-space:nowrap;transform:scaleX(0.9600);transform-origin:0 0;">Spring Valley</div>
<div style="position:absolute;left:275px;top:624px;width:18px;height:18px;background:transparent;box-sizing:border-box;border:2px solid #0e5e98;border-radius:2.5px"></div>
<div style="position:absolute;left:303.65px;top:624.40px;font-size:12px;font-weight:400;line-height:20px;color:#2a2a2a;white-space:nowrap;transform:scaleX(0.8229);transform-origin:0 0;">13</div>
<div style="position:absolute;left:511.05px;top:624.40px;font-size:12px;font-weight:400;line-height:20px;color:#2a2a2a;white-space:nowrap;transform:scaleX(0.9316);transform-origin:0 0;">12/16/2021</div>
<div style="position:absolute;left:716.89px;top:624.40px;font-size:12px;font-weight:400;line-height:20px;color:#2a2a2a;white-space:nowrap;transform:scaleX(0.8790);transform-origin:0 0;">$130.00</div>
<div style="position:absolute;left:923.89px;top:624.40px;font-size:12px;font-weight:400;line-height:20px;color:#2a2a2a;white-space:nowrap;transform:scaleX(0.8790);transform-origin:0 0;">$130.00</div>
<div style="position:absolute;left:1130.28px;top:624.40px;font-size:12px;font-weight:400;line-height:20px;color:#2a2a2a;white-space:nowrap;transform:scaleX(0.9971);transform-origin:0 0;">Amazon</div>
<div style="position:absolute;left:275px;top:649px;width:18px;height:18px;background:transparent;box-sizing:border-box;border:2px solid #0e5e98;border-radius:2.5px"></div>
<div style="position:absolute;left:303.65px;top:649.40px;font-size:12px;font-weight:400;line-height:20px;color:#2a2a2a;white-space:nowrap;transform:scaleX(0.8229);transform-origin:0 0;">14</div>
<div style="position:absolute;left:511.05px;top:649.40px;font-size:12px;font-weight:400;line-height:20px;color:#2a2a2a;white-space:nowrap;transform:scaleX(0.9316);transform-origin:0 0;">12/16/2021</div>
<div style="position:absolute;left:716.89px;top:649.40px;font-size:12px;font-weight:400;line-height:20px;color:#2a2a2a;white-space:nowrap;transform:scaleX(0.8790);transform-origin:0 0;">$140.00</div>
<div style="position:absolute;left:923.89px;top:649.40px;font-size:12px;font-weight:400;line-height:20px;color:#2a2a2a;white-space:nowrap;transform:scaleX(0.8790);transform-origin:0 0;">$140.00</div>
<div style="position:absolute;left:1129.38px;top:649.40px;font-size:12px;font-weight:400;line-height:20px;color:#2a2a2a;white-space:nowrap;transform:scaleX(0.9391);transform-origin:0 0;">KateStore</div>
<div style="position:absolute;left:275px;top:674px;width:18px;height:3px;background:transparent;box-sizing:border-box;border:2px solid #0e5e98;border-bottom:none;border-radius:2.5px 2.5px 0 0"></div>
<div style="position:absolute;left:1336px;top:236px;width:7px;height:274px;background:#dadada;"></div>
<svg style="position:absolute;left:1335px;top:666px" width="9" height="7" viewBox="0 0 9 7"><path d="M1 1 L4.5 5 L8 1" fill="none" stroke="#e2e2e2" stroke-width="1.1"/></svg>
<div style="position:absolute;left:1034.03px;top:695.40px;font-size:12px;font-weight:400;line-height:20px;color:#1e1e1e;white-space:nowrap;transform:scaleX(1.0089);transform-origin:0 0;">Total Amount: $7,793.44</div>
<div style="position:absolute;left:1186.54px;top:695.40px;font-size:12px;font-weight:400;line-height:20px;color:#1e1e1e;white-space:nowrap;transform:scaleX(0.9749);transform-origin:0 0;">Total Open Balance: $6,676.66</div>
<div style="position:absolute;left:1228px;top:181px;width:138px;height:123px;background:#ffffff;box-sizing:border-box;border:1px solid #a9a9a9"></div>
<div style="position:absolute;left:1232.22px;top:187.20px;font-size:12px;font-weight:400;line-height:20px;color:#1e1e1e;white-space:nowrap;transform:scaleX(0.9600);transform-origin:0 0;">Gift Card #</div>
<svg style="position:absolute;left:1344px;top:188px" width="18" height="18" viewBox="0 0 18 18">
<rect x="0" y="0" width="18" height="18" rx="2.5" fill="#0e5e98"/>
<path d="M3 8.8 L7 12.6 L15.4 4.2" fill="none" stroke="#fff" stroke-width="1.6"/></svg>
<div style="position:absolute;left:1231.86px;top:210.20px;font-size:12px;font-weight:400;line-height:20px;color:#1e1e1e;white-space:nowrap;transform:scaleX(0.9600);transform-origin:0 0;">Date</div>
<svg style="position:absolute;left:1344px;top:211px" width="18" height="18" viewBox="0 0 18 18">
<rect x="0" y="0" width="18" height="18" rx="2.5" fill="#0e5e98"/>
<path d="M3 8.8 L7 12.6 L15.4 4.2" fill="none" stroke="#fff" stroke-width="1.6"/></svg>
<div style="position:absolute;left:1232.78px;top:233.20px;font-size:12px;font-weight:400;line-height:20px;color:#1e1e1e;white-space:nowrap;transform:scaleX(0.9600);transform-origin:0 0;">Amount</div>
<svg style="position:absolute;left:1344px;top:234px" width="18" height="18" viewBox="0 0 18 18">
<rect x="0" y="0" width="18" height="18" rx="2.5" fill="#0e5e98"/>
<path d="M3 8.8 L7 12.6 L15.4 4.2" fill="none" stroke="#fff" stroke-width="1.6"/></svg>
<div style="position:absolute;left:1232.25px;top:256.20px;font-size:12px;font-weight:400;line-height:20px;color:#1e1e1e;white-space:nowrap;transform:scaleX(0.9600);transform-origin:0 0;">Open Balance</div>
<svg style="position:absolute;left:1344px;top:257px" width="18" height="18" viewBox="0 0 18 18">
<rect x="0" y="0" width="18" height="18" rx="2.5" fill="#0e5e98"/>
<path d="M3 8.8 L7 12.6 L15.4 4.2" fill="none" stroke="#fff" stroke-width="1.6"/></svg>
<div style="position:absolute;left:1232.21px;top:279.20px;font-size:12px;font-weight:400;line-height:20px;color:#1e1e1e;white-space:nowrap;transform:scaleX(0.9644);transform-origin:0 0;">Can be used only at</div>
<svg style="position:absolute;left:1344px;top:280px" width="18" height="18" viewBox="0 0 18 18">
<rect x="0" y="0" width="18" height="18" rx="2.5" fill="#0e5e98"/>
<path d="M3 8.8 L7 12.6 L15.4 4.2" fill="none" stroke="#fff" stroke-width="1.6"/></svg>
</body></html>
